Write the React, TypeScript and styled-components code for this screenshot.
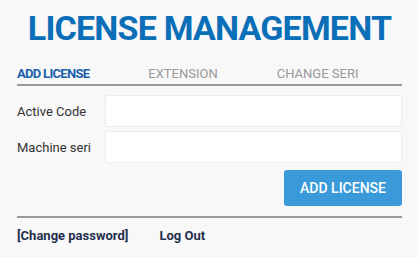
import styled, { createGlobalStyle } from 'styled-components';

const GlobalStyle = createGlobalStyle`
   body {
      margin: 0;
      background: #f8f8f8;
      font-family: Roboto, 'Liberation Sans', Arial, sans-serif;
   }
`;

const Container = styled.div`
   padding: 0 16px 0 17px;
`;

const Title = styled.h1`
   margin: 0;
   padding-top: 10px;
   text-align: center;
   white-space: nowrap;
   font-size: 34px;
   line-height: 36px;
   font-weight: 700;
   color: #0b6fb8;
   letter-spacing: -0.8px;
`;

const Tabs = styled.div`
   display: flex;
   gap: 59px;
   margin-top: 20px;
   padding-bottom: 3px;
   border-bottom: 2px solid #9a9a9a;
`;

const Tab = styled.div<{ $active?: boolean }>`
   font-size: 13px;
   line-height: 15px;
   font-weight: ${(p) => (p.$active ? 700 : 400)};
   letter-spacing: ${(p) => (p.$active ? '-0.7px' : '0')};
   color: ${(p) => (p.$active ? '#1a5fab' : '#999')};
   cursor: pointer;
`;

const Form = styled.form`
   display: flex;
   flex-direction: column;
   gap: 4px;
   margin-top: 9px;
`;

const Row = styled.div`
   display: flex;
   align-items: center;
`;

const Label = styled.label`
   width: 88px;
   flex-shrink: 0;
   font-size: 13px;
   color: #333;
`;

const Input = styled.input`
   flex: 1;
   height: 32px;
   box-sizing: border-box;
   border: 1px solid #ececec;
   border-radius: 2px;
   background: #fff;
   outline: none;
   padding: 0 8px;
   font-family: inherit;
`;

const Actions = styled.div`
   display: flex;
   justify-content: flex-end;
   margin-top: 3px;
`;

const Button = styled.button`
   width: 118px;
   height: 36px;
   border: none;
   border-radius: 3px;
   background: #3a9ad9;
   color: #fff;
   font-family: inherit;
   font-size: 14px;
   font-weight: 500;
   cursor: pointer;
`;

const Footer = styled.div`
   display: flex;
   gap: 31px;
   margin-top: 10px;
   padding-top: 10px;
   border-top: 2px solid #9a9a9a;
`;

const Link = styled.a`
   font-size: 13px;
   font-weight: 700;
   color: #24304d;
   text-decoration: none;
   cursor: pointer;
`;

const App = () => {
   return (
      <>
         <GlobalStyle />
         <Container>
            <Title>LICENSE MANAGEMENT</Title>
            <Tabs>
               <Tab $active>ADD LICENSE</Tab>
               <Tab>EXTENSION</Tab>
               <Tab>CHANGE SERI</Tab>
            </Tabs>
            <Form onSubmit={(e) => e.preventDefault()}>
               <Row>
                  <Label>Active Code</Label>
                  <Input />
               </Row>
               <Row>
                  <Label>Machine seri</Label>
                  <Input />
               </Row>
               <Actions>
                  <Button type="submit">ADD LICENSE</Button>
               </Actions>
            </Form>
            <Footer>
               <Link>[Change password]</Link>
               <Link>Log Out</Link>
            </Footer>
         </Container>
      </>
   );
};

export default App;
